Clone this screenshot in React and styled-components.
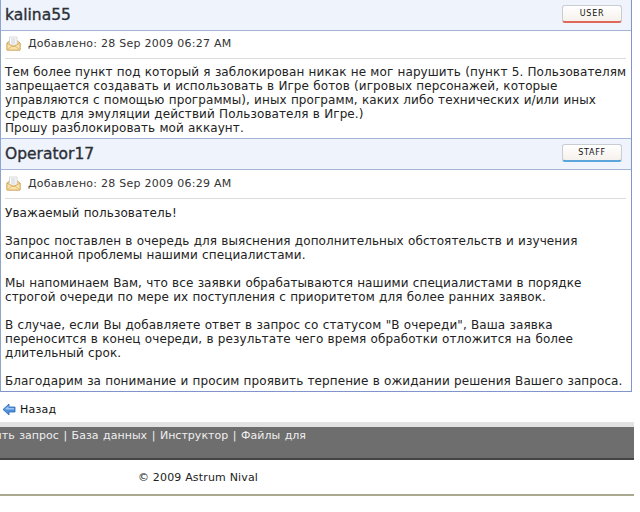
import React from 'react'
import styled, { createGlobalStyle } from 'styled-components'

const GlobalStyle = createGlobalStyle`
  html, body { margin: 0; padding: 0; background: #fff; }
  body { width: 640px; height: 512px; overflow: hidden; font-family: "DejaVu Sans", Verdana, sans-serif; font-size: 11px; color: #222; }
`

const Page = styled.div`
  width: 634px;
  overflow: hidden;
`
const Board = styled.div`
  width: 630px;
  border-left: 1px solid #8ea4cf;
  border-right: 1px solid #8195cc;
  border-bottom: 1px solid #8195cc;
`
const PostHead = styled.div`
  height: 30px;
  display: flex;
  align-items: center;
  justify-content: space-between;
  padding: 0 9px 0 4px;
  background: #eef3fc;
  border-bottom: 1px solid #a3b5d6;
  ${p => p.$top && 'border-top: 1px solid #a3b5d6;'}
`
const Author = styled.div`
  font-size: 15.5px;
  color: #2b2f36;
  -webkit-text-stroke: 0.35px #2b2f36;
`
const RoleBadge = styled.div`
  width: 58px;
  height: 15px;
  margin-bottom: 2px;
  display: flex;
  align-items: center;
  justify-content: center;
  font-size: 8px;
  letter-spacing: 0.7px;
  color: #111;
  background: linear-gradient(#fff, #f6f1ec);
  border: 1px solid #c9ccd3;
  border-bottom: 2px solid ${p => p.$accent};
  border-radius: 3px;
`
const Meta = styled.div`
  margin: 0 5px 0 4px;
  padding: 0 0 2px 1px;
  box-sizing: border-box;
  height: ${p => p.$height}px;
  display: flex;
  align-items: center;
  gap: 7px;
  border-bottom: 1px solid #dddddd;
  color: #333;
  letter-spacing: 0.25px;
`
const PostBody = styled.div`
  padding: ${p => p.$pad}px 0 0 4px;
  font-size: 12px;
  line-height: 14px;
  letter-spacing: 0.09px;
  word-spacing: 0.3px;
  white-space: nowrap;
  color: #222;
  height: ${p => p.$height}px;
`
const PostLine = styled.div`
  min-height: 14px;
`
const BackRow = styled.div`
  height: 26px;
  padding: 4px 0 0 2px;
  display: flex;
  align-items: center;
  gap: 4px;
  color: #111;
  letter-spacing: 0.2px;
`
const NavBand = styled.div`
  height: 31px;
  background: #6e6e6e;
  border-top: 5px solid #e2e2e2;
  border-bottom: 2px solid #444;
  color: #eee;
  overflow: hidden;
`
const NavLinks = styled.div`
  display: flex;
  justify-content: flex-end;
  width: 306px;
  white-space: nowrap;
  margin-top: 2px;
  line-height: 14px;
  letter-spacing: 0.02px;
  word-spacing: 1px;
`
const Footer = styled.div`
  height: 34px;
  padding: 0 0 0 138px;
  display: flex;
  align-items: center;
  border-bottom: 2px solid #a9a98f;
  color: #222;
  letter-spacing: 0.17px;
`

function MailIcon() {
  return (
    <svg width="15" height="15" viewBox="0 0 15 15">
      <path d="M1 7 L7.5 2 L14 7 V14 H1 Z" fill="#f6d693" stroke="#d0a860" strokeWidth="1" />
      <path d="M3.5 1 H11 V9 H3.5 Z" fill="#fff" stroke="#c8c8c8" strokeWidth="0.7" />
      <path d="M5 3 H9.5 M5 5 H9.5 M5 7 H9.5" stroke="#b8c0cc" strokeWidth="0.8" />
      <path d="M1 7 L7 10.5 H8 L14 7 V14 H1 Z" fill="#fbe2a8" stroke="#d0a860" strokeWidth="0.8" />
      <path d="M1.5 13.5 L6.5 9.8 M13.5 13.5 L8.5 9.8" stroke="#dcb56c" strokeWidth="0.8" />
    </svg>
  )
}

function BackIcon() {
  return (
    <svg width="14" height="13" viewBox="0 0 14 13">
      <path d="M1 6.5 L7 1 V4 H13 V9 H7 V12 Z" fill="#4f8fdc" stroke="#2f69b5" strokeWidth="0.8" />
      <path d="M3 6 L6.5 3 V5 H12 V6.5 H4 Z" fill="#9cc6f2" />
    </svg>
  )
}

function Post({ author, role, accent, time, metaHeight, pad, height, top, lines }) {
  return (
    <>
      <PostHead $top={top}>
        <Author>{author}</Author>
        <RoleBadge $accent={accent}>{role}</RoleBadge>
      </PostHead>
      <Meta $height={metaHeight}>
        <MailIcon />
        <span>Добавлено: 28 Sep 2009 {time}</span>
      </Meta>
      <PostBody $pad={pad} $height={height}>
        {lines.map((line, i) => (
          <PostLine key={i}>{line}</PostLine>
        ))}
      </PostBody>
    </>
  )
}

const firstPost = [
  'Тем более пункт под который я заблокирован никак не мог нарушить (пункт 5. Пользователям',
  'запрещается создавать и использовать в Игре ботов (игровых персонажей, которые',
  'управляются с помощью программы), иных программ, каких либо технических и/или иных',
  'средств для эмуляции действий Пользователя в Игре.)',
  'Прошу разблокировать мой аккаунт.',
]

const secondPost = [
  'Уважаемый пользователь!',
  '',
  'Запрос поставлен в очередь для выяснения дополнительных обстоятельств и изучения',
  'описанной проблемы нашими специалистами.',
  '',
  'Мы напоминаем Вам, что все заявки обрабатываются нашими специалистами в порядке',
  'строгой очереди по мере их поступления с приоритетом для более ранних заявок.',
  '',
  'В случае, если Вы добавляете ответ в запрос со статусом "В очереди", Ваша заявка',
  'переносится в конец очереди, в результате чего время обработки отложится на более',
  'длительный срок.',
  '',
  'Благодарим за понимание и просим проявить терпение в ожидании решения Вашего запроса.',
]

export default function App() {
  return (
    <Page>
      <GlobalStyle />
      <Board>
        <Post author="kalina55" role="USER" accent="#e0685a" time="06:27 AM" metaHeight={28} pad={6} height={73} lines={firstPost} />
        <Post top author="Operator17" role="STAFF" accent="#5aa6dc" time="06:29 AM" metaHeight={29} pad={7} height={185} lines={secondPost} />
      </Board>
      <BackRow>
        <BackIcon />
        <span>Назад</span>
      </BackRow>
      <NavBand>
        <NavLinks>Добавить запрос | База данных | Инструктор | Файлы для</NavLinks>
      </NavBand>
      <Footer>© 2009 Astrum Nival</Footer>
    </Page>
  )
}
